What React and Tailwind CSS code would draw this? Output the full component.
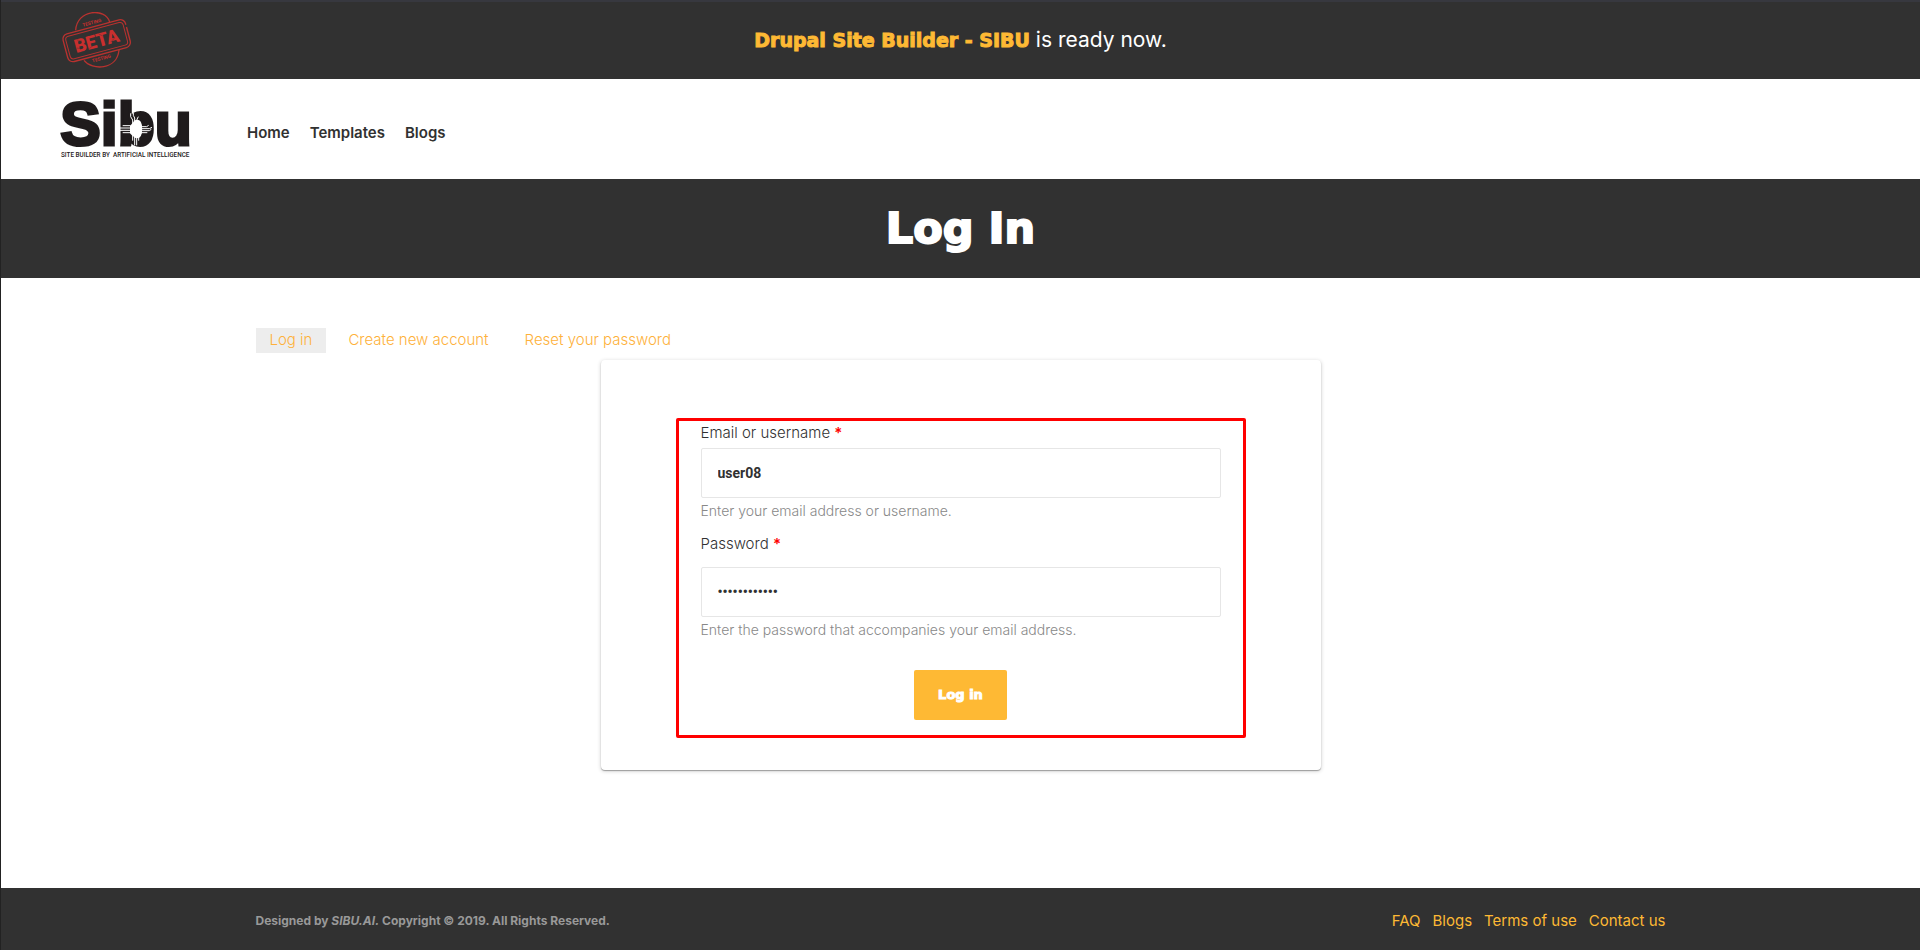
import React, { useState } from 'react';

const navLinks = ['Home', 'Templates', 'Blogs'];
const footerLinks = ['FAQ', 'Blogs', 'Terms of use', 'Contact us'];
const tabs = ['Log in', 'Create new account', 'Reset your password'];

function BetaStamp() {
  return (
    <svg viewBox="182 36 216 168" className="h-14 w-[72px]" fill="none" stroke="#b8322f" role="img" aria-label="Beta testing">
      <path d="M226 91C229 28 315 22 328 66" strokeWidth="4" />
      <path d="M251 181C275 212 350 211 356 150" strokeWidth="4" />
      <g transform="rotate(-15 289 122)">
        <rect x="192" y="79" width="194" height="86" rx="16" strokeWidth="4" strokeDasharray="190 7 400 0" />
        <rect x="200" y="87" width="178" height="70" rx="10" strokeWidth="3" />
        <g fill="#c92f2e" stroke="none" textAnchor="middle" fontFamily="Roboto, sans-serif">
          <text x="289" y="142" fontSize="56" fontWeight="900">BETA</text>
          <text x="289" y="71" fontSize="14" fontWeight="700">TESTING</text>
          <text x="289" y="182" fontSize="14" fontWeight="700">TESTING</text>
        </g>
        <path d="M232 104l14 8M262 139l12-5M300 104l10 9M329 137l14-9M226 128l9 4" stroke="#313131" strokeWidth="1" />
      </g>
    </svg>
  );
}

function SibuLogo() {
  return (
    <svg viewBox="183 300 390 174" className="h-[58px] w-[130px] overflow-visible" role="img" aria-label="Sibu">
      <text
        x="181"
        y="434"
        fontSize="182"
        fontWeight="700"
        fontFamily="'Liberation Sans', sans-serif"
        fill="#1f1b1c"
        stroke="#1f1b1c"
        strokeWidth="9"
      >
        Sibu
      </text>
      <text x="183" y="470" fontSize="19" fontWeight="500" fontFamily="Roboto, sans-serif" fill="#1f1b1c">
        SITE BUILDER BY{'\u00a0 '}ARTIFICIAL INTELLIGENCE
      </text>
      <path d="M397 370h20l8 8v22l-8 7h-20l-7-7v-22z" fill="#fff" />
      <g fill="none" stroke="#fff" strokeWidth="3">
        <path d="M358 384h34M358 391h34M368 377h24M368 398h24" />
        <path d="M422 380h18l6-4M422 386h26l8-4M422 392h26l6-4M422 398h20" />
        <path d="M398 376v-16l-6-10v-10M404 376v-22l-4-8v-8M411 376v-18l4-8M417 376v-12" />
        <path d="M398 402v20M404 402v34M410 402v34M416 402v20" />
      </g>
    </svg>
  );
}

function Field({ id, label, help, type, value, onChange, labelClass }) {
  return (
    <div>
      <label htmlFor={id} className={`block text-[15px] leading-6 font-light text-[#313131] ${labelClass}`}>
        {label} <span className="font-semibold text-[#ff0000]">*</span>
      </label>
      <input
        id={id}
        type={type}
        value={value}
        onChange={e => onChange(e.target.value)}
        className="block h-[50px] w-full rounded-xs border border-[#e6e6e6] bg-white px-4 font-['Roboto',sans-serif] text-sm font-bold text-[#313131] outline-none"
      />
      <p className="text-sm leading-[26px] font-light text-[#888888]">{help}</p>
    </div>
  );
}

export default function App() {
  const [name, setName] = useState('user08');
  const [pass, setPass] = useState('password1234');

  return (
    <div className="flex min-h-screen flex-col border-l border-[#222222] bg-white font-['Inter',sans-serif] text-[15px] text-[#313131]">
      <div className="relative flex h-[79px] items-center justify-center border-t-2 border-[#37383f] bg-[#313131] pb-0.5">
        <div className="absolute left-[60px]">
          <BetaStamp />
        </div>
        <p className="text-[21px] text-white">
          <strong className="font-['DejaVu_Sans',sans-serif] text-[19px] font-bold text-[#feb934] [-webkit-text-stroke:1px_#feb934]">
            Drupal Site Builder - SIBU
          </strong>{' '}
          is ready now.
        </p>
      </div>

      <header className="flex h-[100px] items-center gap-14 px-[60px]">
        <a href="#home"><SibuLogo /></a>
        <nav className="flex gap-5 pt-2">
          {navLinks.map(link => (
            <a key={link} href={`#${link}`} className="font-semibold">{link}</a>
          ))}
        </nav>
      </header>

      <div className="flex h-[99px] items-center justify-center bg-[#313131]">
        <h1 className="font-['DejaVu_Sans',sans-serif] text-[43px] font-bold text-white [-webkit-text-stroke:2px_white]">Log In</h1>
      </div>

      <main className="mx-auto w-full max-w-[1410px] flex-1 pt-[50px]">
        <nav className="mb-[7px] flex gap-2">
          {tabs.map((tab, i) => (
            <a
              key={tab}
              href="#tab"
              className={`px-[14px] pb-px leading-6 font-light text-[#feb13a] ${i === 0 ? 'bg-[#ededed]' : ''}`}
            >
              {tab}
            </a>
          ))}
        </nav>

        <div className="mx-auto max-w-[720px] rounded-sm bg-white px-[75px] pt-[58px] pb-8 shadow-[0_1px_4px_rgba(0,0,0,0.2),0_1px_1px_rgba(0,0,0,0.3)]">
          <form onSubmit={e => e.preventDefault()} className="rounded-xs border-3 border-[#ff0000] px-[22px] pb-[15px]">
            <Field
              id="name"
              label="Email or username"
              help="Enter your email address or username."
              type="text"
              value={name}
              onChange={setName}
              labelClass="mb-[3px]"
            />
            <div className="mt-2">
              <Field
                id="pass"
                label="Password"
                help="Enter the password that accompanies your email address."
                type="password"
                value={pass}
                onChange={setPass}
                labelClass="mb-[11px]"
              />
            </div>
            <button
              type="submit"
              className="mx-auto mt-[27px] block h-[50px] rounded-xs bg-[#feb934] px-6 font-['DejaVu_Sans',sans-serif] text-[13px] font-bold text-white [-webkit-text-stroke:1px_white]"
            >
              Log in
            </button>
          </form>
        </div>
      </main>

      <footer className="bg-[#313131]">
        <div className="mx-auto flex h-[62px] w-full max-w-[1410px] items-center justify-between pt-1">
          <p className="text-xs font-bold text-[#999999]">
            Designed by <em>SIBU.AI.</em> Copyright © 2019. All Rights Reserved.
          </p>
          <nav className="flex gap-3">
            {footerLinks.map(link => (
              <a key={link} href={`#${link}`} className="text-[#feb934]">{link}</a>
            ))}
          </nav>
        </div>
      </footer>
    </div>
  );
}
